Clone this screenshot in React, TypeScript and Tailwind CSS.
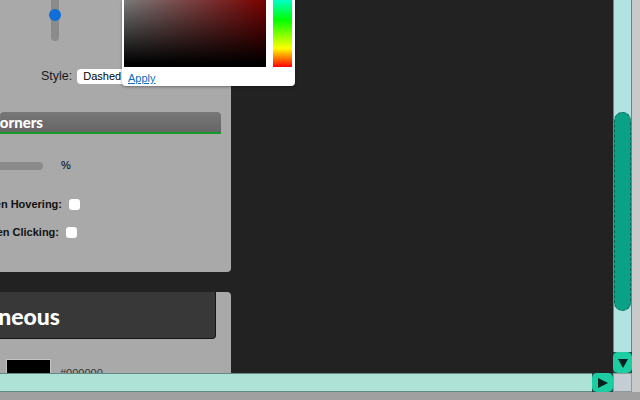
export default function App() {
  return (
    <div className="relative flex h-[400px] w-[640px] flex-col overflow-hidden bg-[#a0a0a0] font-['Liberation_Sans',sans-serif] text-black">
      <div className="flex h-[373px] bg-[#c9c9c9]">
        <div className="flex w-[613px] bg-[#222222]">
          <div className="flex w-[231px] flex-col gap-5 overflow-hidden">
            <section className="h-[272px] rounded-br bg-[#a9a9a9]">
              <div className="relative ml-[51px] h-[41px] w-2 rounded-b bg-[#8b8b8b]">
                <div className="absolute left-[-2px] top-[9px] size-3 rounded-full bg-[#0f6fd6]" />
              </div>
              <div className="mt-7 flex h-[15px] items-center">
                <span className="ml-[41px] text-[12.5px] leading-none text-[#1a1a1a]">Style:</span>
                <div className="ml-[5px] flex h-[15px] w-[60px] items-center rounded-sm bg-white pl-1.5 text-[11px] leading-none">Dashed</div>
              </div>
              <div className="mt-[28px] flex h-[22px] w-[221px] items-end justify-end rounded-t-sm border-b-2 border-[#159a2a] bg-[linear-gradient(#777777,#666666)] pr-[178px]">
                <span className="font-['Lato',sans-serif] text-[15px] font-black leading-[20px] text-white">Corners</span>
              </div>
              <div className="mt-7 flex h-2 items-center">
                <div className="h-2 w-[43px] rounded-r bg-[#8a8a8a]" />
                <span className="ml-[18px] mb-[2px] text-[11px] leading-none">%</span>
              </div>
              <div className="mt-[27px] flex h-[14px] items-center justify-end pr-[151px]">
                <span className="whitespace-nowrap text-[11px] font-bold leading-none text-[#111111]">When Hovering:</span>
                <span className="ml-[7px] size-[11px] shrink-0 rounded-[3px] bg-white" />
              </div>
              <div className="mt-[14px] flex h-[14px] items-center justify-end pr-[154px]">
                <span className="whitespace-nowrap text-[11px] font-bold leading-none text-[#111111]">When Clicking:</span>
                <span className="ml-[7px] size-[11px] shrink-0 rounded-[3px] bg-white" />
              </div>
            </section>
            <section className="h-[81px] overflow-hidden rounded-tr bg-[#a9a9a9]">
              <div className="flex h-[47px] w-[216px] items-center justify-end rounded-br-sm border-b border-r border-[#151515] bg-[#383838] pr-[155px]">
                <span className="mt-[2px] whitespace-nowrap font-['Lato',sans-serif] text-[23px] font-black leading-none text-white">Miscellaneous</span>
              </div>
              <div className="mt-5 flex items-start">
                <div className="ml-[6px] h-[20px] w-[45px] border border-[#c4c4c4] bg-black" />
                <span className="ml-[9px] mt-[7px] text-[11px] leading-[14px] text-[#333333]">#000000</span>
              </div>
            </section>
          </div>
        </div>
        <div className="flex w-[19px] flex-col border-x border-[#5f8a86] bg-[#b3e3e1]">
          <div className="h-[112px]" />
          <div className="h-[199px] rounded-[9px] border border-dashed border-[#0c5f55] bg-[#0ba186]" />
          <div className="h-[41px]" />
          <div className="-mx-px bg-[#1d4a44]">
            <div className="flex h-[21px] items-center justify-center rounded-[5px] bg-[#1ccda2]">
              <svg width="10" height="10" viewBox="0 0 10 10"><path d="M0 1h10L5 10z" fill="#06201d" /></svg>
            </div>
          </div>
        </div>
      </div>
      <div className="flex h-[19px]">
        <div className="w-[592px] border-y border-[#5f8a86] bg-[#aee2d6]" />
        <div className="w-[21px] bg-[#1d4a44]">
          <div className="flex h-[19px] items-center justify-center rounded-[5px] bg-[#1ccda2]">
            <svg width="10" height="10" viewBox="0 0 10 10"><path d="M0 0v10l10-5z" fill="#06201d" /></svg>
          </div>
        </div>
        <div className="w-[19px] border border-[#8f9a9a] bg-[#c3cdd3]" />
        <div className="flex-1 bg-[#c9c9c9]" />
      </div>
      <div className="flex-1" />

      <div className="absolute left-[122px] top-0 h-[86px] w-[173px] rounded-b-sm bg-white shadow-[0_1px_3px_rgba(0,0,0,0.35)]">
        <div className="flex gap-[7px] pl-[2px]">
          <div className="h-[67px] w-[142px] bg-[linear-gradient(to_bottom,rgba(0,0,0,0.52),#000000_95%),linear-gradient(to_right,#ffffff,#ff0000)]" />
          <div className="h-[67px] w-[19px] bg-[linear-gradient(to_top,#ff0000,#ffff00_28%,#00ff00_70%,#00ffc8_100%)]" />
        </div>
        <a className="ml-[6px] mt-[4px] block text-[11px] leading-[14px] text-[#0b6fc2] underline">Apply</a>
      </div>
    </div>
  )
}
